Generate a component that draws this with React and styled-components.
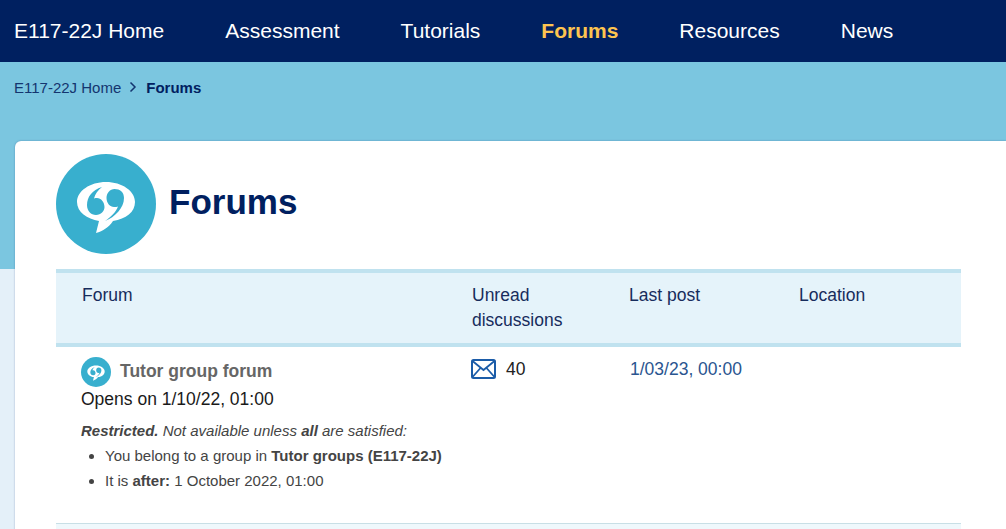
import React from 'react';
import styled, { createGlobalStyle } from 'styled-components';

const GlobalStyle = createGlobalStyle`
  html, body {
    margin: 0;
    height: 100%;
    overflow: hidden;
    background: #e4f0f9;
    font-family: "Liberation Sans", Arial, sans-serif;
  }
`;

const Page = styled.div`
  width: 1006px;
  height: 529px;
  overflow: hidden;
  background: linear-gradient(#7bc6e0 0, #7bc6e0 269px, #e4f0f9 269px);
`;

const Nav = styled.nav`
  display: flex;
  align-items: center;
  gap: 61px;
  height: 62px;
  padding-left: 14px;
  background: #002060;
`;

const NavLink = styled.a`
  font-size: 21px;
  color: ${(p) => (p.$active ? '#fdc450' : '#fff')};
  font-weight: ${(p) => (p.$active ? 700 : 400)};
`;

const Crumbs = styled.div`
  display: flex;
  align-items: center;
  height: 79px;
  padding: 0 0 29px 14px;
  box-sizing: border-box;
  font-size: 15px;
  color: #14356f;
  strong {
    color: #002060;
  }
  svg {
    margin: 0 9px 0 8px;
  }
`;

const Card = styled.main`
  margin-left: 15px;
  padding: 13px 45px 0 41px;
  height: 400px;
  background: #fff;
  border-radius: 6px 0 0 0;
  box-shadow: 0 0 2px rgba(0, 32, 96, 0.35);
`;

const Heading = styled.header`
  display: flex;
  align-items: center;
  gap: 13px;
  margin-bottom: 15px;
  h1 {
    margin: 0 0 4px;
    font-size: 35px;
    color: #002060;
  }
`;

const Grid = styled.div`
  display: grid;
  grid-template-columns: 390px 157px 170px 1fr;
  padding-left: 26px;
`;

const Head = styled(Grid)`
  background: #e5f3fa;
  border-top: 4px solid #c0e2ef;
  border-bottom: 4px solid #c0e2ef;
  padding-top: 10px;
  padding-bottom: 10px;
  font-size: 17.5px;
  line-height: 25px;
  color: #172c5c;
`;

const Row = styled(Grid)`
  padding-top: 10px;
  padding-left: 25px;
  height: 177px;
  box-sizing: border-box;
  border-bottom: 1px solid #c8dfe6;
`;

const NextRow = styled.div`
  height: 20px;
  background: #eff8fc;
`;

const ForumName = styled.div`
  display: flex;
  align-items: center;
  gap: 9px;
  font-size: 17.5px;
  font-weight: 700;
  color: #666;
  span {
    margin-top: -2px;
  }
`;

const Opens = styled.div`
  font-size: 17.5px;
  line-height: 25px;
  color: #1a1a1a;
`;

const Restriction = styled.div`
  margin-top: 6px;
  font-size: 15px;
  line-height: 25px;
  color: #444;
  em {
    display: block;
  }
  ul {
    margin: 0;
    padding-left: 24px;
  }
`;

const Unread = styled.div`
  display: flex;
  align-items: flex-start;
  gap: 10px;
  font-size: 17.5px;
  line-height: 24px;
  color: #222;
  svg {
    margin-top: 2px;
  }
`;

const LastPost = styled.div`
  padding-left: 2px;
  font-size: 17.5px;
  line-height: 24px;
  color: #2a5590;
`;

function ForumIcon({ size }) {
  return (
    <svg width={size} height={size} viewBox="0 0 100 100" style={{ flex: 'none' }}>
      <circle cx="50" cy="50" r="50" fill="#38afce" />
      <path
        fill="#fff"
        d="M50 28C34 28 21 37 21 48C21 58 31 65 43 67L40 79C47 77 53 73 57 67C70 65 79 58 79 48C79 37 66 28 50 28z"
      />
      <path
        fill="#38afce"
        d="M46 33C36 36 31 43 31 51C31 57 35 61 40 61C45 61 48.5 57 48.5 53C48.5 48 45 44 41 44C40 44 39 44 38 44.5C39 40 42 36 46 33zM49 67C59 63 68 54 68 44C68 38 64 35 58.5 35C54 35 50.5 39 50.5 44C50.5 49 54 53 58 53C59.5 53 61 53 62 52.5C60 58 55 63 49 67z"
      />
    </svg>
  );
}

function MailIcon() {
  return (
    <svg width="25" height="20" viewBox="0 0 25 20" fill="none" stroke="#1b5ca8" strokeWidth="2">
      <rect x="1" y="1" width="23" height="18" rx="1.5" />
      <path d="M1.5 2l11 9 11-9M1.5 18l8-9M23.5 18l-8-9" strokeWidth="1.8" />
    </svg>
  );
}

export default function App() {
  return (
    <Page>
      <GlobalStyle />
      <Nav>
        <NavLink>E117-22J Home</NavLink>
        <NavLink>Assessment</NavLink>
        <NavLink>Tutorials</NavLink>
        <NavLink $active>Forums</NavLink>
        <NavLink>Resources</NavLink>
        <NavLink>News</NavLink>
      </Nav>
      <Crumbs>
        E117-22J Home
        <svg width="8" height="12" viewBox="0 0 8 12" fill="none" stroke="#14356f" strokeWidth="1.5">
          <path d="M1.5 1.5L6 6l-4.5 4.5" />
        </svg>
        <strong>Forums</strong>
      </Crumbs>
      <Card>
        <Heading>
          <ForumIcon size={100} />
          <h1>Forums</h1>
        </Heading>
        <Head>
          <div>Forum</div>
          <div>Unread<br />discussions</div>
          <div>Last post</div>
          <div>Location</div>
        </Head>
        <Row>
          <div>
            <ForumName>
              <ForumIcon size={30} />
              <span>Tutor group forum</span>
            </ForumName>
            <Opens>Opens on 1/10/22, 01:00</Opens>
            <Restriction>
              <em><strong>Restricted.</strong> Not available unless <strong>all</strong> are satisfied:</em>
              <ul>
                <li>You belong to a group in <strong>Tutor groups (E117-22J)</strong></li>
                <li>It is <strong>after:</strong> 1 October 2022, 01:00</li>
              </ul>
            </Restriction>
          </div>
          <Unread>
            <MailIcon />
            40
          </Unread>
          <LastPost>1/03/23, 00:00</LastPost>
          <div />
        </Row>
        <NextRow />
      </Card>
    </Page>
  );
}
